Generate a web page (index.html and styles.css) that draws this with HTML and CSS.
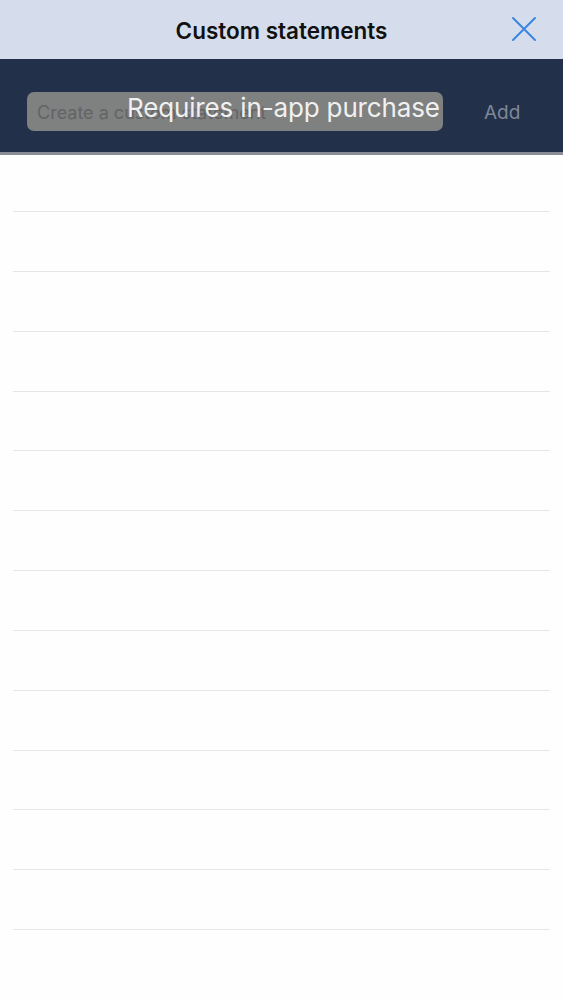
FILE: index.html
```html
<html>

<head>
  <title>
    Custom statements
  </title>
  <link rel="stylesheet" href="styles.css">
</head>

<body>
  <header class="titlebar">
    <div class="title">Custom statements</div>
    <button class="close" aria-label="Close">
      <svg width="26" height="26" viewBox="0 0 26 26">
        <path d="M2 2 L24 24 M24 2 L2 24" stroke="#3b86e0" stroke-width="2" fill="none" stroke-linecap="round"/>
      </svg>
    </button>
  </header>

  <div class="composer">
    <div class="field">
      <span class="placeholder">Create a custom statement</span>
      <div class="toast">Requires in-app purchase</div>
    </div>
    <span class="add">Add</span>
  </div>

  <ul class="list">
    <li class="row first"></li>
    <li class="row"></li>
    <li class="row"></li>
    <li class="row"></li>
    <li class="row"></li>
    <li class="row"></li>
    <li class="row"></li>
    <li class="row"></li>
    <li class="row"></li>
    <li class="row"></li>
    <li class="row"></li>
    <li class="row"></li>
    <li class="row"></li>
  </ul>
</body>
</html>
```

FILE: styles.css
```css
body {
  margin: 0;
  padding: 0;
  background: #fefefe;
  font-family: Inter, "Liberation Sans", sans-serif;
}
.titlebar {
  height: 59px;
  background: #d5ddec;
  display: flex;
  align-items: center;
  justify-content: center;
  position: relative;
}
.title {
  font-size: 22.5px;
  font-weight: 600;
  color: #111;
  margin-top: 1px;
}
.close {
  position: absolute;
  right: 26px;
  top: 16px;
  border: none;
  background: none;
  padding: 0;
  width: 26px;
  height: 26px;
}
.composer {
  background: #22304a;
  border-bottom: 3px solid #8a8c96;
  display: flex;
  align-items: flex-start;
  padding: 33px 0 0 27px;
  box-sizing: border-box;
  height: 96px;
}
.field {
  position: relative;
  width: 416px;
  height: 39px;
  background: #7f8080;
  border-radius: 7px;
  display: flex;
  align-items: center;
  padding-left: 10px;
  box-sizing: border-box;
}
.placeholder {
  font-size: 18px;
  color: #626466;
  margin-top: 1px;
}
.toast {
  position: absolute;
  left: 100px;
  top: 0;
  font-size: 26px;
  color: #f0f0f0;
  white-space: nowrap;
  letter-spacing: -0.15px;
}
.add {
  margin-left: 41px;
  margin-top: 9px;
  font-size: 19px;
  color: #7e8797;
}
.list {
  list-style: none;
  margin: 0;
  padding: 0 13px;
}
.row {
  height: 58.85px;
  border-bottom: 1px solid #e6e6e6;
}
.row.first {
  height: 56px;
}
```
